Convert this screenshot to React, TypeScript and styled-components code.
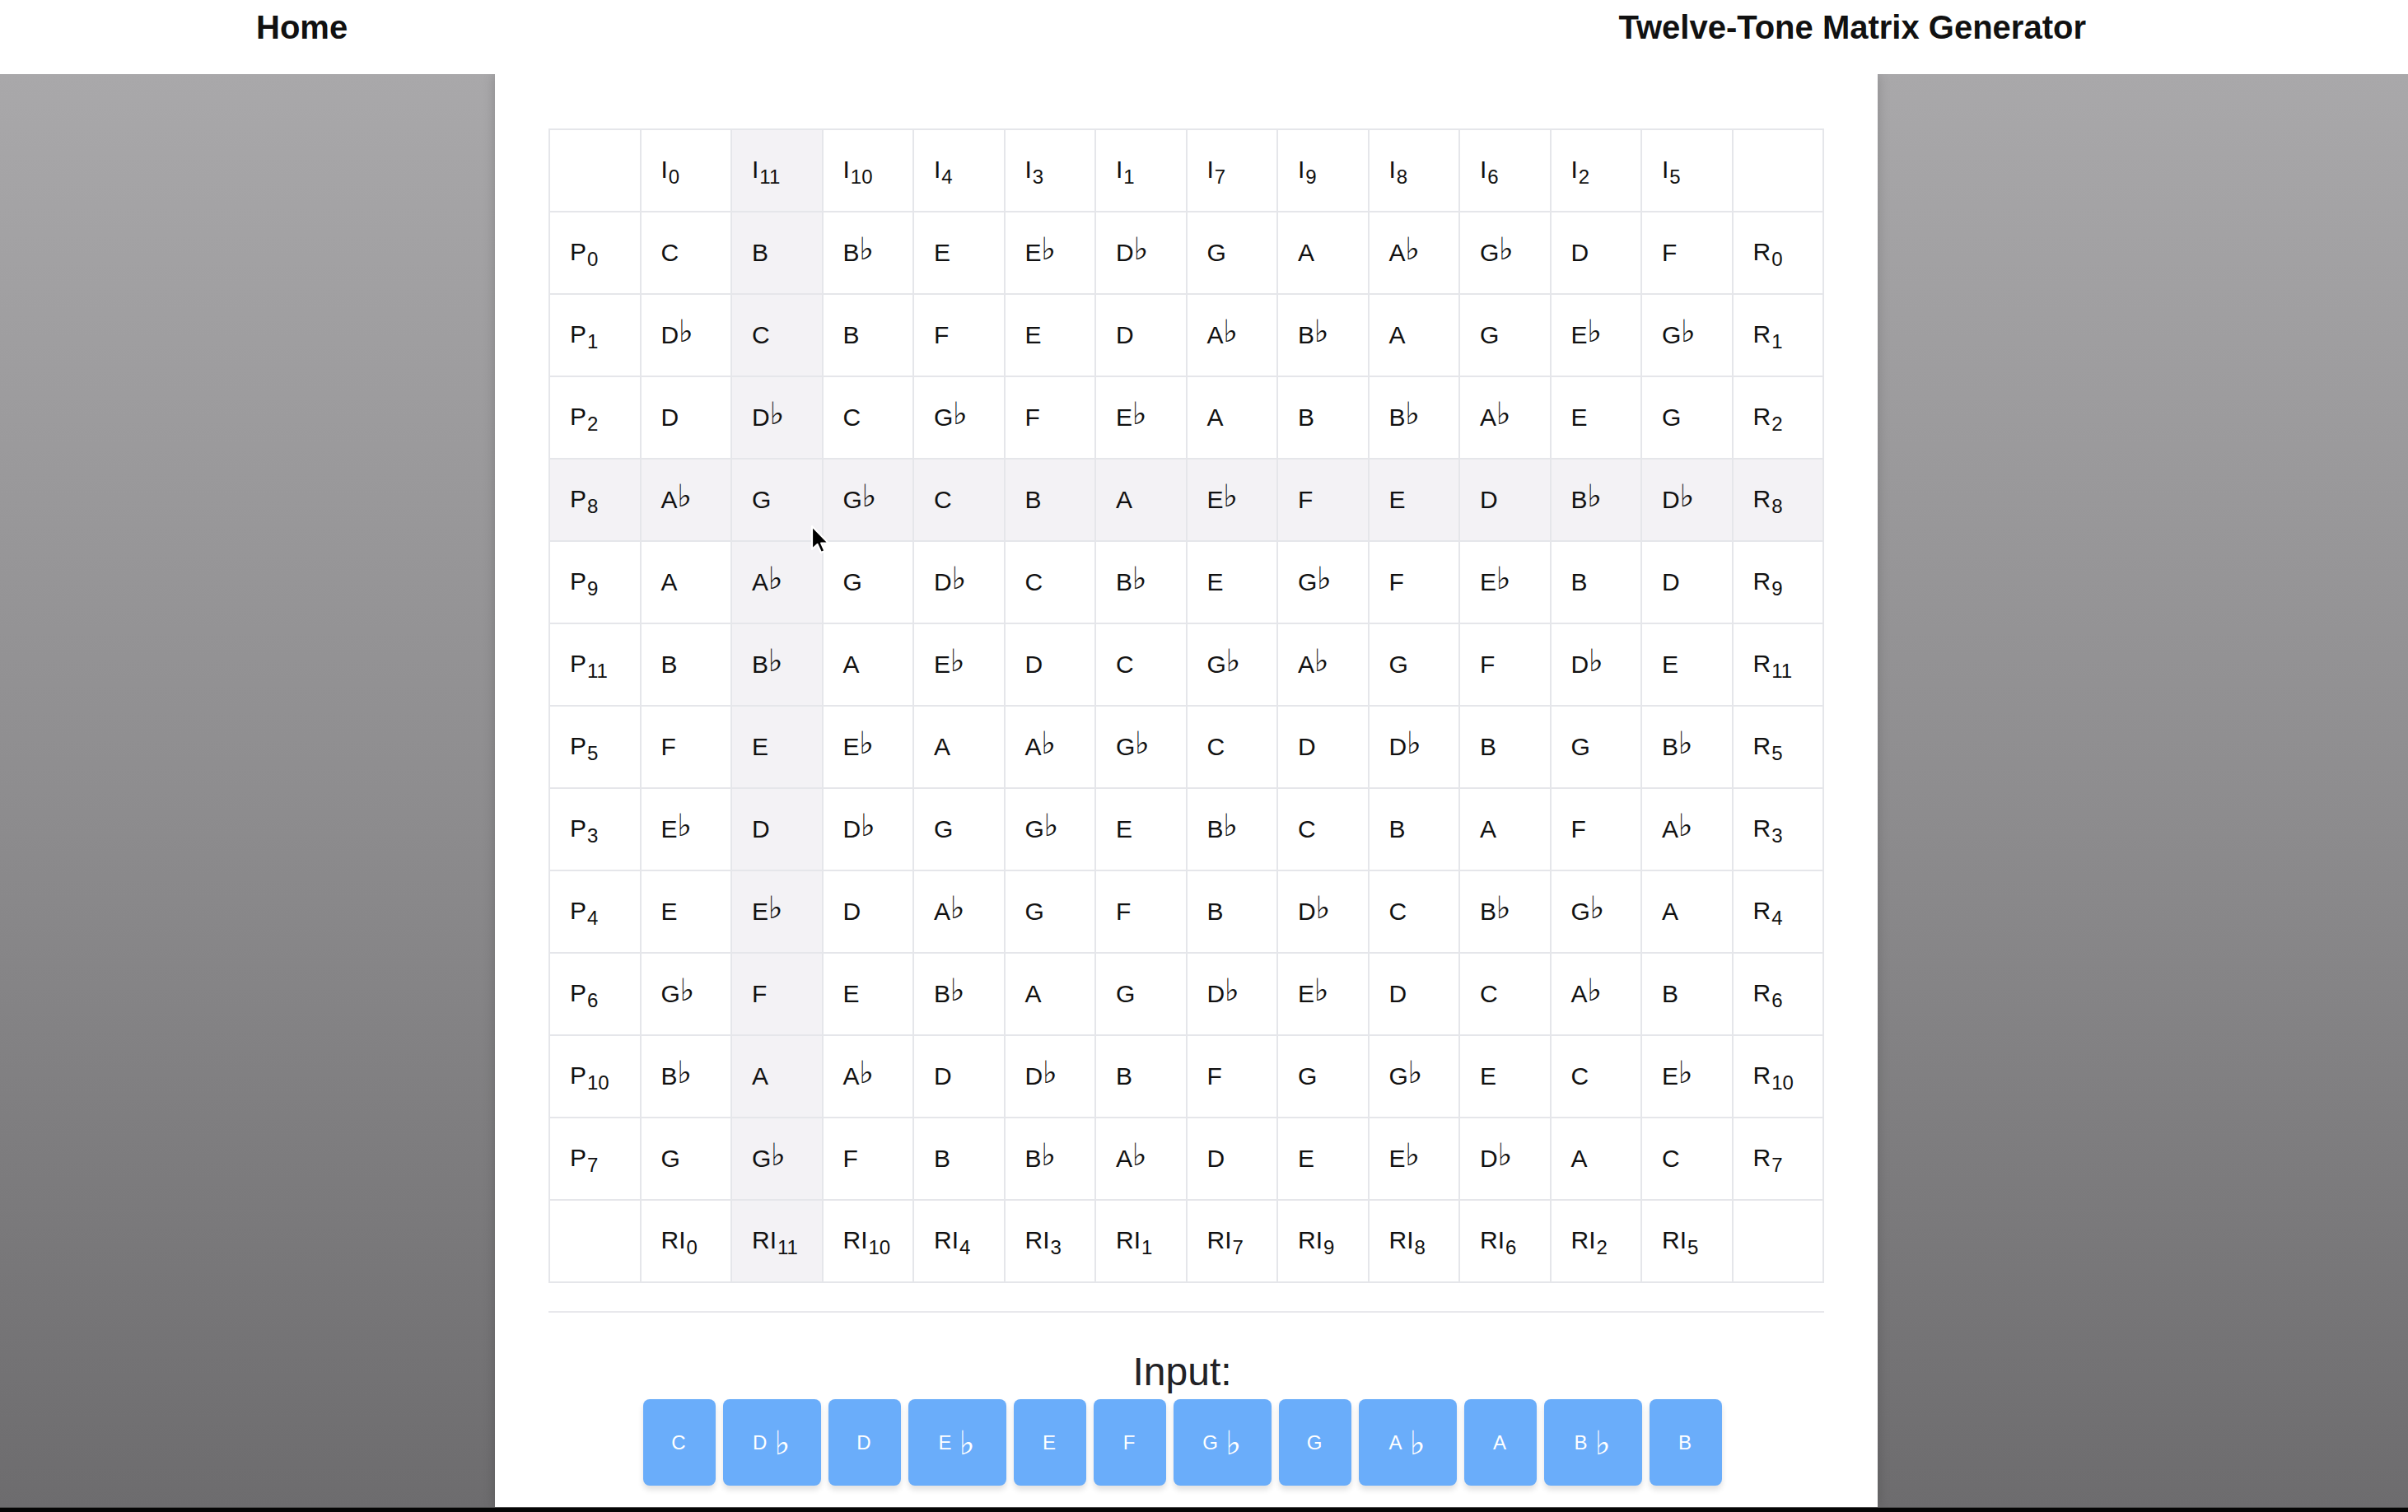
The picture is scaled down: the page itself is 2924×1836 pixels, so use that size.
import React from "react";
import styled, { createGlobalStyle } from "styled-components";

const GlobalStyle = createGlobalStyle`
  html, body { margin: 0; padding: 0; }
  body {
    font-family: "Liberation Sans", Arial, sans-serif;
    color: #111;
    overflow: hidden;
  }
  * { box-sizing: border-box; }
`;

const NAMES = ["C", "Db", "D", "Eb", "E", "F", "Gb", "G", "Ab", "A", "Bb", "B"];
const ROW = [0, 11, 10, 4, 3, 1, 7, 9, 8, 6, 2, 5];
const INV = ROW.map((p) => (12 - p) % 12);
const HOVER_ROW = 3; // P8 (0-based among P rows)
const HOVER_COL = 1; // I11 (0-based among I columns)

const Page = styled.div`
  display: flex;
  flex-direction: column;
  height: 1836px;
  width: 2924px;
  position: relative;
`;

const Header = styled.header`
  height: 90px;
  flex: none;
  background: #ffffff;
  display: flex;
  align-items: flex-start;
  justify-content: space-between;
  padding: 13px 391px 0 311px;
  position: relative;
  z-index: 1;
`;

const NavLink = styled.a`
  font-family: "Liberation Sans", Arial, sans-serif;
  font-weight: 700;
  font-size: 40px;
  line-height: 40px;
  color: #111;
  text-decoration: none;
`;

const Main = styled.main`
  flex: 1;
  display: flex;
  justify-content: center;
  padding-right: 43px;
  background: linear-gradient(180deg, #a9a8aa 0%, #8e8d8f 50%, #6d6c6e 100%);
  min-height: 0;
`;

const Panel = styled.section`
  width: 1679px;
  background: #ffffff;
  padding: 66px 65px 0;
  box-shadow: 0 0 14px rgba(0, 0, 0, 0.18);
  display: flex;
  flex-direction: column;
`;

const Matrix = styled.table`
  width: 100%;
  border-collapse: collapse;
  table-layout: fixed;
  border: 2px solid #e5e6ea;
`;

const Row = styled.tr`
  height: 100px;
`;

const Cell = styled.td<{ $hl?: boolean }>`
  border: 2px solid #e5e6ea;
  padding: 0 0 0 24px;
  font-family: "Liberation Sans", Arial, sans-serif;
  font-size: 30px;
  line-height: 36px;
  color: #111;
  vertical-align: middle;
  text-align: left;
  white-space: nowrap;
  background: ${(p) => (p.$hl ? "#f3f2f5" : "#ffffff")};
`;

const Sub = styled.span`
  font-size: 0.8em;
  position: relative;
  top: 0.28em;
  margin-left: 1px;
`;

const Flat = styled.span`
  font-family: "DejaVu Sans", sans-serif;
  font-weight: 700;
  font-size: 1.25em;
  line-height: 0;
  position: relative;
  top: -0.06em;
  margin-left: 0;
`;

const Divider = styled.hr`
  margin: 34px 0 0;
  border: none;
  height: 2px;
  background: #e8e8ec;
`;

const InputLabel = styled.div`
  margin-top: 48px;
  margin-right: 10px;
  text-align: center;
  font-family: "Liberation Sans", Arial, sans-serif;
  font-weight: 300;
  font-size: 48px;
  line-height: 48px;
  color: #222226;
`;

const ButtonRow = styled.div`
  margin-top: 9px;
  margin-right: 10px;
  display: flex;
  justify-content: center;
  gap: 9px;
`;

const NoteButton = styled.button<{ $wide?: boolean }>`
  height: 105px;
  min-width: ${(p) => (p.$wide ? "119px" : "88px")};
  padding: 0 20px;
  border: none;
  border-radius: 8px;
  background: #6aadfa;
  color: #ffffff;
  font-family: "Liberation Sans", Arial, sans-serif;
  font-size: 24px;
  line-height: 24px;
  letter-spacing: 1px;
  box-shadow: 0 5px 7px rgba(0, 0, 0, 0.12);
  display: flex;
  align-items: center;
  justify-content: center;
  gap: 8px;
  cursor: pointer;
`;

const ButtonFlat = styled.span`
  font-family: "DejaVu Sans", sans-serif;
  font-size: 40px;
  line-height: 24px;
  position: relative;
  top: 0;
`;

const BottomEdge = styled.div`
  height: 6px;
  flex: none;
  background: #050505;
  border-top: 1px solid #4a4a4a;
`;

const Cursor = styled.svg`
  position: absolute;
  left: 983px;
  top: 637px;
  width: 26px;
  height: 38px;
  pointer-events: none;
`;

function Note({ n }: { n: number }) {
  const name = NAMES[n];
  if (name.length === 2) {
    return (
      <>
        {name[0]}
        <Flat>♭</Flat>
      </>
    );
  }
  return <>{name}</>;
}

function Label({ prefix, n }: { prefix: string; n: number }) {
  return (
    <>
      {prefix}
      <Sub>{n}</Sub>
    </>
  );
}

export default function App() {
  return (
    <>
      <GlobalStyle />
      <Page>
        <Header>
          <NavLink href="#">Home</NavLink>
          <NavLink href="#">Twelve-Tone Matrix Generator</NavLink>
        </Header>
        <Main>
          <Panel>
            <Matrix>
              <tbody>
                <Row>
                  <Cell />
                  {ROW.map((p, j) => (
                    <Cell key={j} $hl={j === HOVER_COL}>
                      <Label prefix="I" n={p} />
                    </Cell>
                  ))}
                  <Cell />
                </Row>
                {INV.map((start, i) => (
                  <Row key={i}>
                    <Cell $hl={i === HOVER_ROW}>
                      <Label prefix="P" n={start} />
                    </Cell>
                    {ROW.map((p, j) => (
                      <Cell key={j} $hl={i === HOVER_ROW || j === HOVER_COL}>
                        <Note n={(start + p) % 12} />
                      </Cell>
                    ))}
                    <Cell $hl={i === HOVER_ROW}>
                      <Label prefix="R" n={start} />
                    </Cell>
                  </Row>
                ))}
                <Row>
                  <Cell />
                  {ROW.map((p, j) => (
                    <Cell key={j} $hl={j === HOVER_COL}>
                      <Label prefix="RI" n={p} />
                    </Cell>
                  ))}
                  <Cell />
                </Row>
              </tbody>
            </Matrix>
            <Divider />
            <InputLabel>Input:</InputLabel>
            <ButtonRow>
              {NAMES.map((name, k) => (
                <NoteButton key={k} $wide={name.length === 2}>
                  <span>{name[0]}</span>
                  {name.length === 2 && <ButtonFlat>♭</ButtonFlat>}
                </NoteButton>
              ))}
            </ButtonRow>
          </Panel>
        </Main>
        <BottomEdge />
        <Cursor viewBox="0 0 26 38">
          <path
            d="M3 2 L3 30 L9.5 24 L14 34 L18.5 32 L14.2 22.5 L23 22.5 Z"
            fill="#000"
            stroke="#fff"
            strokeWidth="2.2"
            strokeLinejoin="round"
          />
        </Cursor>
      </Page>
    </>
  );
}
